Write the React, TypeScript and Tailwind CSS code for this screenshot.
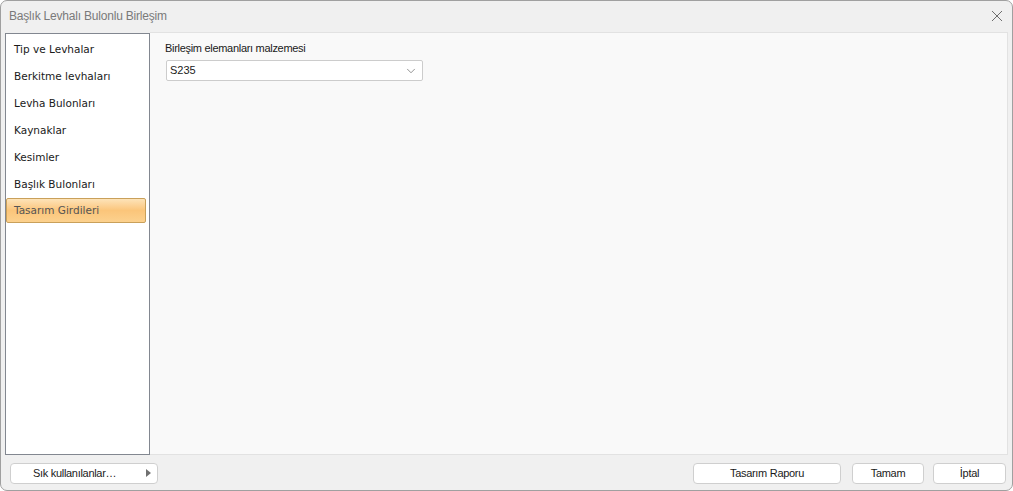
import { ChevronDown } from 'lucide-react'

const items = [
    'Tip ve Levhalar',
    'Berkitme levhaları',
    'Levha Bulonları',
    'Kaynaklar',
    'Kesimler',
    'Başlık Bulonları',
    'Tasarım Girdileri',
]

const SELECTED = 'Tasarım Girdileri'

export default function App() {
    return (
        <div className="w-[1013px] h-[491px] bg-white">
            <div
                className="w-full h-full flex flex-col rounded-[7px] border border-[#a0a0a0] bg-[#f0f0f0] overflow-hidden"
                style={{ fontFamily: '"Segoe UI", "Liberation Sans", sans-serif' }}
            >
                {/* Title bar */}
                <div className="h-[30px] shrink-0 flex items-center justify-between pl-[8px] pr-[9px]">
                    <span className="text-[12px] tracking-[-0.2px] text-[#7a7a7a] leading-none">
                        Başlık Levhalı Bulonlu Birleşim
                    </span>
                    <svg width="12" height="12" viewBox="0 0 12 12" fill="none">
                        <path
                            d="M1 1l10 10M11 1L1 11"
                            stroke="#6e6e6e"
                            strokeWidth="1"
                        />
                    </svg>
                </div>

                {/* Body */}
                <div className="flex-1 flex pl-[4px] pr-[4px] min-h-0">
                    {/* Navigation list */}
                    <div className="w-[145px] mt-[2px] bg-white border border-[#828790] flex flex-col pt-[2px] pr-[3px]">
                        {items.map((item) =>
                            item === SELECTED ? (
                                <div
                                    key={item}
                                    className="h-[25px] flex items-center pl-[7px] rounded-[2px] border border-[#c9a05a] bg-gradient-to-b from-[#fde3b8] via-[#fbc57a] to-[#fcd18e] text-[#555] text-[10.5px]"
                                    style={{ fontFamily: 'Tahoma, "DejaVu Sans", sans-serif' }}
                                >
                                    {item}
                                </div>
                            ) : (
                                <div
                                    key={item}
                                    className="h-[27px] flex items-center pl-[8px] text-[#1a1a1a] text-[10.5px]"
                                    style={{ fontFamily: 'Tahoma, "DejaVu Sans", sans-serif' }}
                                >
                                    {item}
                                </div>
                            )
                        )}
                    </div>

                    {/* Content */}
                    <div className="flex-1 bg-[#f9f9f9] border-y border-r border-[#e2e2e2] mt-[1px] pl-[15px] pt-[7px]">
                        <div className="text-[11px] tracking-[-0.3px] text-[#1a1a1a] leading-[16px]">
                            Birleşim elemanları malzemesi
                        </div>
                        <div className="mt-[4px] w-[257px] h-[21px] bg-white border border-[#cccccc] rounded-[2px] flex items-center justify-between pl-[3px] pr-[4px] ml-[1px]">
                            <span className="text-[11px] text-[#1a1a1a]">S235</span>
                            <ChevronDown size={14} strokeWidth={1.2} color="#666" />
                        </div>
                    </div>
                </div>

                {/* Bottom bar */}
                <div className="h-[35px] shrink-0 flex items-center pl-[9px] pr-[6px] pt-[1px]">
                    <button className="w-[148px] h-[21px] bg-white border border-[#cfcfcf] rounded-[4px] flex items-center justify-between pl-[22px] pr-[6px] text-[11px] tracking-[-0.3px] text-[#1a1a1a]">
                        <span>Sık kullanılanlar…</span>
                        <svg width="5" height="8" viewBox="0 0 5 8">
                            <path d="M0 0l5 4-5 4z" fill="#707070" />
                        </svg>
                    </button>
                    <div className="flex-1" />
                    <button className="w-[148px] h-[21px] bg-white border border-[#cfcfcf] rounded-[4px] text-[11px] tracking-[-0.3px] text-[#1a1a1a]">
                        Tasarım Raporu
                    </button>
                    <button className="ml-[11px] w-[72px] h-[21px] bg-white border border-[#cfcfcf] rounded-[4px] text-[11px] tracking-[-0.3px] text-[#1a1a1a]">
                        Tamam
                    </button>
                    <button className="ml-[9px] w-[73px] h-[21px] bg-white border border-[#cfcfcf] rounded-[4px] text-[11px] tracking-[-0.3px] text-[#1a1a1a]">
                        İptal
                    </button>
                </div>
            </div>
        </div>
    )
}
